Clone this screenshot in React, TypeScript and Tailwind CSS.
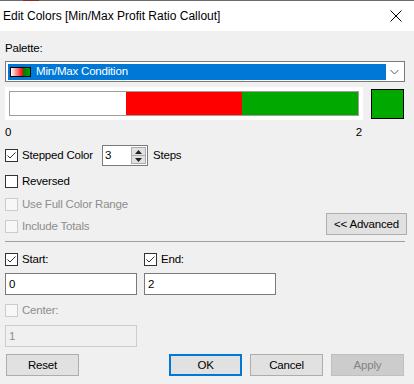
import React from 'react';

const font = "font-['Segoe_UI','Liberation_Sans',Arial,sans-serif]";

const Check: React.FC<{ checked?: boolean; disabled?: boolean }> = ({ checked, disabled }) => (
  <div
    className={`w-[13px] h-[13px] shrink-0 border flex items-center justify-center ${
      disabled ? 'border-[#cccccc] bg-[#f7f7f7]' : 'border-[#333333] bg-white'
    }`}
  >
    {checked && (
      <svg width="11" height="11" viewBox="0 0 11 11">
        <polyline points="1.5,5.5 4,8 9.5,2.5" fill="none" stroke="#333" strokeWidth="1" />
      </svg>
    )}
  </div>
);

const CheckRow: React.FC<{ label: string; checked?: boolean; disabled?: boolean }> = ({ label, checked, disabled }) => (
  <div className="flex items-center gap-[4px] h-[15px]">
    <Check checked={checked} disabled={disabled} />
    <span className={disabled ? 'text-[#8d8d8d]' : 'text-black'}>{label}</span>
  </div>
);

const Btn: React.FC<{ children: React.ReactNode; primary?: boolean; disabled?: boolean; className?: string }> = ({
  children,
  primary,
  disabled,
  className = '',
}) => (
  <div
    className={`h-[22px] w-[73px] flex items-center justify-center ${
      disabled
        ? 'bg-[#cccccc] border border-[#bfbfbf] text-[#838383]'
        : primary
        ? 'bg-[#e1e1e1] border-2 border-[#0078d7] text-black'
        : 'bg-[#e1e1e1] border border-[#adadad] text-black'
    } ${className}`}
  >
    {children}
  </div>
);

export default function App() {
  return (
    <div className={`w-[414px] h-[384px] bg-[#f0f0f0] text-[11.5px] leading-[15px] tracking-[-0.2px] text-black overflow-hidden ${font}`}>
      <div className="flex h-px">
        <div className="w-[23px] bg-[#6b6b6b]" />
        <div className="w-[16px] bg-[#8b2a2a]" />
        <div className="flex-1 bg-[#6b6b6b]" />
      </div>

      {/* title bar */}
      <div className="h-[30px] bg-white flex items-center justify-between pl-[3px] pr-[12px]">
        <span className="text-[12px] tracking-normal">Edit Colors [Min/Max Profit Ratio Callout]</span>
        <svg width="12" height="12" viewBox="0 0 12 12">
          <path d="M0.5 0.5 L11.5 11.5 M11.5 0.5 L0.5 11.5" stroke="#000" strokeWidth="1" />
        </svg>
      </div>

      <div className="px-[5px] pt-[10px]">
        <div>Palette:</div>

        {/* dropdown */}
        <div className="mt-[5px] h-[21px] w-[400px] border border-[#7a7a7a] bg-white flex items-center pl-[2px] pr-[1px]">
          <div className="h-[16px] w-[378px] bg-[#0078d7] flex items-center gap-[5px] pl-[2px] text-white">
            <div className="w-[21px] h-[10px] border border-black bg-[linear-gradient(to_right,#ffffff,#ff0000_62%,#007a00_64%,#00a000)]" />
            <span>Min/Max Condition</span>
          </div>
          <div className="flex-1 flex items-center justify-center">
            <svg width="9" height="6" viewBox="0 0 9 6">
              <polyline points="0.5,1 4.5,5 8.5,1" fill="none" stroke="#5a5a5a" strokeWidth="1" />
            </svg>
          </div>
        </div>

        {/* color bar */}
        <div className="mt-[5px] flex items-start">
          <div className="w-[358px] h-[33px] bg-white pl-[4px] pt-[4px]">
            <div className="w-[350px] h-[25px] border border-[#a09e95] flex">
              <div className="flex-1 bg-white" />
              <div className="flex-1 bg-[#ff0000]" />
              <div className="flex-1 bg-[#00a800]" />
            </div>
          </div>
          <div className="ml-[8px] mt-[2px] w-[33px] h-[30px] border border-black bg-[#00a800]" />
        </div>

        <div className="w-[358px] mt-[5px] flex justify-between pr-[1px]">
          <span>0</span>
          <span>2</span>
        </div>

        {/* stepped */}
        <div className="mt-[5px] h-[21px] flex items-center">
          <div className="w-[97px]">
            <CheckRow label="Stepped Color" checked />
          </div>
          <div className="w-[46px] h-[21px] border border-[#7a7a7a] bg-white flex items-center pl-[2px] pr-[1px]">
            <span className="flex-1">3</span>
            <div className="w-[15px] h-[17px] border border-[#adadad] bg-[#e1e1e1] flex flex-col">
              <div className="flex-1 flex items-center justify-center border-b border-[#adadad]">
                <svg width="7" height="4" viewBox="0 0 7 4">
                  <polygon points="3.5,0 7,4 0,4" fill="#222" />
                </svg>
              </div>
              <div className="flex-1 flex items-center justify-center">
                <svg width="7" height="4" viewBox="0 0 7 4">
                  <polygon points="0,0 7,0 3.5,4" fill="#222" />
                </svg>
              </div>
            </div>
          </div>
          <span className="ml-[5px]">Steps</span>
        </div>

        <div className="mt-[8px]">
          <CheckRow label="Reversed" />
        </div>

        <div className="flex justify-between items-end">
          <div className="flex flex-col">
            <div className="mt-[8px]">
              <CheckRow label="Use Full Color Range" disabled />
            </div>
            <div className="mt-[7px]">
              <CheckRow label="Include Totals" disabled />
            </div>
          </div>
          <div className="mb-[-1px] mr-[2px] h-[22px] w-[81px] bg-[#e1e1e1] border border-[#adadad] flex items-center justify-center">
            &lt;&lt; Advanced
          </div>
        </div>

        <div className="mt-[7px] h-px w-[400px] bg-[#a0a0a0]" />

        {/* start / end */}
        <div className="mt-[10px] flex">
          <div className="w-[139px]">
            <CheckRow label="Start:" checked />
          </div>
          <CheckRow label="End:" checked />
        </div>

        <div className="mt-[6px] flex gap-[7px]">
          <div className="w-[132px] h-[22px] border border-[#7a7a7a] bg-white flex items-center pl-[3px]">0</div>
          <div className="w-[132px] h-[22px] border border-[#7a7a7a] bg-white flex items-center pl-[3px]">2</div>
        </div>

        <div className="mt-[8px]">
          <CheckRow label="Center:" disabled />
        </div>

        <div className="mt-[7px] w-[132px] h-[22px] border border-[#cccccc] bg-[#f0f0f0] flex items-center pl-[3px] text-[#8d8d8d]">
          1
        </div>

        {/* buttons */}
        <div className="mt-[7px] flex">
          <Btn className="ml-[1px]">Reset</Btn>
          <Btn primary className="ml-[90px]">OK</Btn>
          <Btn className="ml-[8px]">Cancel</Btn>
          <Btn disabled className="ml-[8px]">Apply</Btn>
        </div>
      </div>
    </div>
  );
}
